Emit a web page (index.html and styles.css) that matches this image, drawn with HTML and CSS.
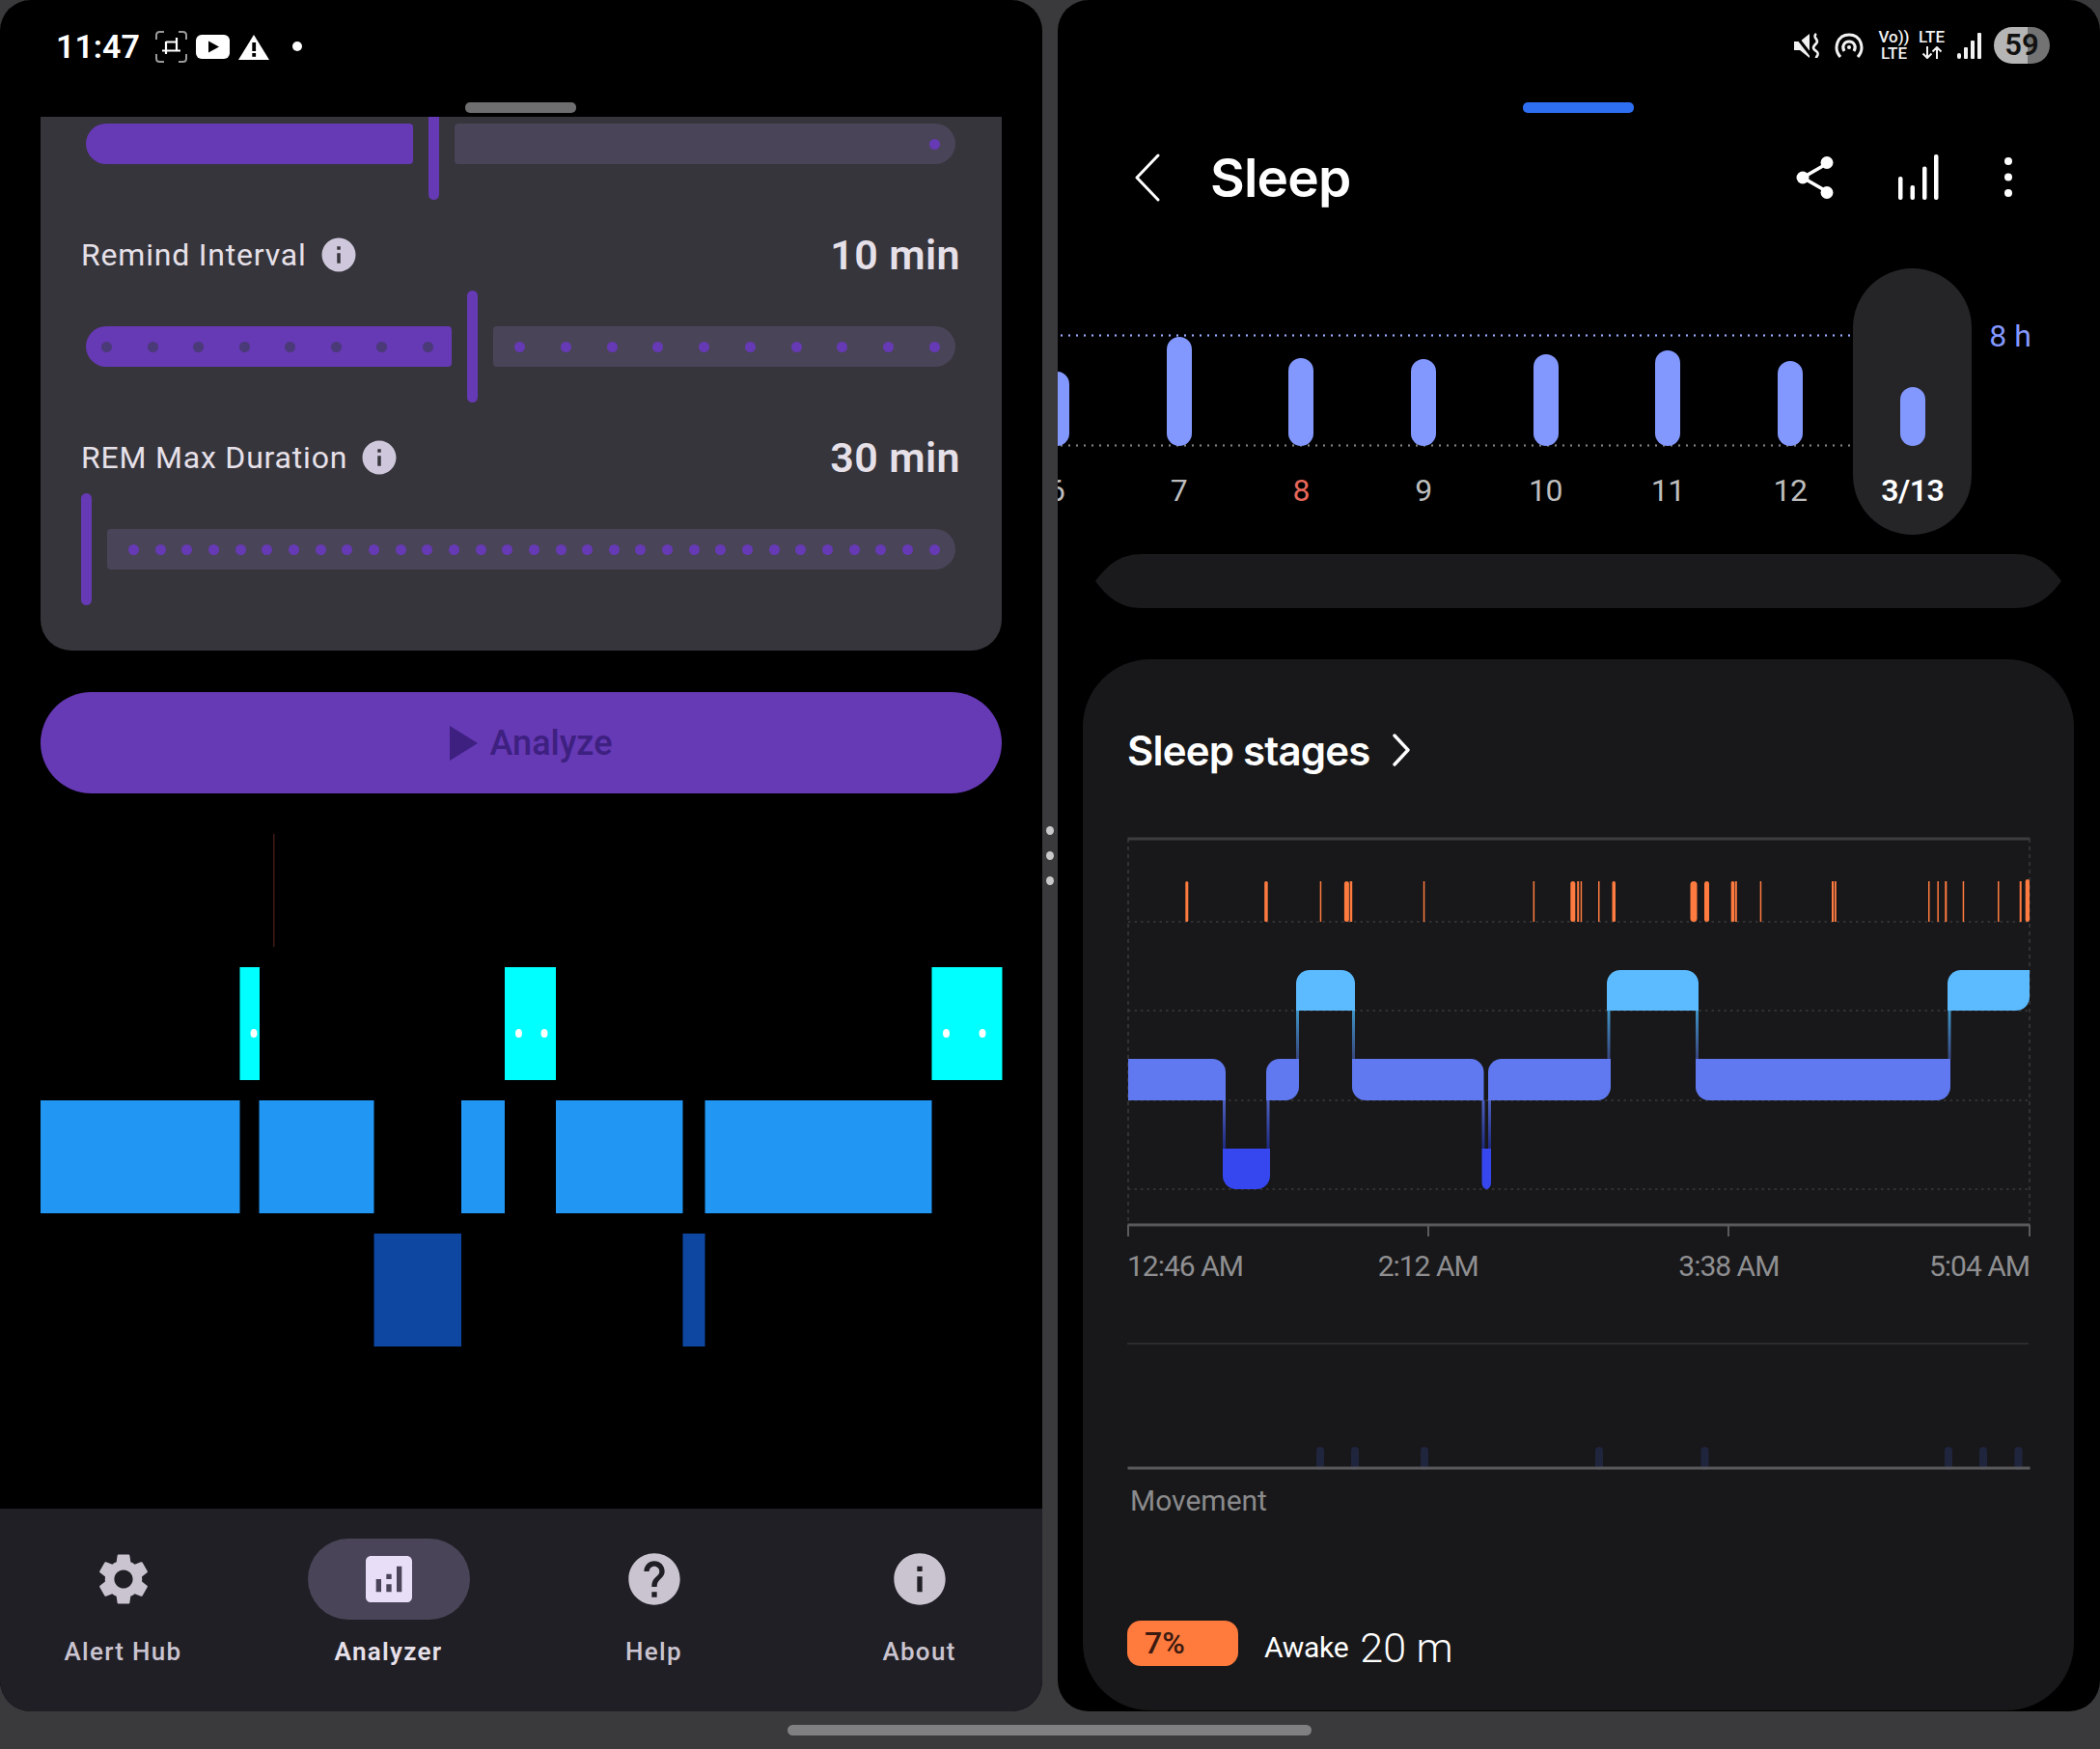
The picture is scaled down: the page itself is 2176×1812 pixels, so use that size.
FILE: index.html
```html
<!DOCTYPE html>
<html lang="en">
<head>
    <meta charset="UTF-8">
    <title>Alert Hub Analyzer and Sleep</title>
    <link rel="stylesheet" href="styles.css">
</head>
<body>

<svg class="sprite" width="0" height="0">
    <symbol id="i-info" viewBox="0 0 24 24"><path d="M12 2C6.48 2 2 6.48 2 12s4.48 10 10 10 10-4.48 10-10S17.52 2 12 2zm1 15h-2v-6h2v6zm0-8h-2V7h2v2z"/></symbol>
    <symbol id="i-gear" viewBox="0 0 24 24"><path d="M19.14 12.94c.04-.3.06-.61.06-.94 0-.32-.02-.64-.07-.94l2.03-1.58c.18-.14.23-.41.12-.61l-1.92-3.32c-.12-.22-.37-.29-.59-.22l-2.39.96c-.5-.38-1.03-.7-1.62-.94l-.36-2.54c-.04-.24-.24-.41-.48-.41h-3.84c-.24 0-.43.17-.47.41l-.36 2.54c-.59.24-1.13.57-1.62.94l-2.39-.96c-.22-.08-.47 0-.59.22L2.74 8.87c-.12.21-.08.47.12.61l2.03 1.58c-.05.3-.09.63-.09.94s.02.64.07.94l-2.03 1.58c-.18.14-.23.41-.12.61l1.92 3.32c.12.22.37.29.59.22l2.39-.96c.5.38 1.03.7 1.62.94l.36 2.54c.05.24.24.41.48.41h3.84c.24 0 .44-.17.47-.41l.36-2.54c.59-.24 1.13-.56 1.62-.94l2.39.96c.22.08.47 0 .59-.22l1.92-3.32c.12-.22.07-.47-.12-.61l-2.01-1.58zM12 15.6c-1.98 0-3.6-1.62-3.6-3.6s1.62-3.6 3.6-3.6 3.6 1.62 3.6 3.6-1.62 3.6-3.6 3.6z"/></symbol>
    <symbol id="i-analytics" viewBox="0 0 24 24"><path d="M19 3H5c-1.1 0-2 .9-2 2v14c0 1.1.9 2 2 2h14c1.1 0 2-.9 2-2V5c0-1.1-.9-2-2-2zM9 17H7v-5h2v5zm4 0h-2v-3h2v3zm0-5h-2v-2h2v2zm4 5h-2V7h2v10z"/></symbol>
    <symbol id="i-help" viewBox="0 0 24 24"><path d="M12 2C6.48 2 2 6.48 2 12s4.48 10 10 10 10-4.48 10-10S17.52 2 12 2zm1 17h-2v-2h2v2zm2.07-7.75l-.9.92C13.45 12.9 13 13.5 13 15h-2v-.5c0-1.1.45-2.1 1.17-2.83l1.24-1.26c.37-.36.59-.86.59-1.41 0-1.1-.9-2-2-2s-2 .9-2 2H8c0-2.21 1.79-4 4-4s4 1.79 4 4c0 .88-.36 1.68-.93 2.25z"/></symbol>
</svg>

<div class="screens">

    <!-- Left app -->
    <main class="pane pane-left">
        <div class="status status-left">
            <span class="clock">11:47</span>
            <svg class="st-shot" width="33" height="33" viewBox="0 0 33 33" fill="none">
                <path d="M1 9V4.500Q1 1 4.500 1H9M24 1h4.500Q32 1 32 4.500V9M32 24v4.500q0 3.500-3.500 3.500H24M9 32H4.500Q1 32 1 28.500V24" stroke="#9a9a9a" stroke-width="2"/>
                <path d="M7 20.500h19M11 11v13M11 11.500h11V20.500M22 7v4" stroke="#fff" stroke-width="2.200"/>
            </svg>
            <svg class="st-yt" width="35" height="25" viewBox="0 0 35 25"><rect width="35" height="25" rx="6" fill="#fff"/><path d="M13 6.500l11 6-11 6z" fill="#000"/></svg>
            <svg class="st-warn" width="32" height="26" viewBox="0 0 32 26"><path d="M16 0L32 26H0z" fill="#fff"/><rect x="14.300" y="8" width="3.800" height="9" fill="#000"/><rect x="14.300" y="19" width="3.800" height="3.800" fill="#000"/></svg>
            <span class="st-dot"></span>
        </div>
        <div class="pane-handle"></div>

        <section class="settings">
            <div class="slider slider-clipped">
                <div class="track track-on" style="width:339px"></div>
                <div class="thumb"></div>
                <div class="track track-off dots-end"><i></i></div>
            </div>

            <div class="setting-row">
                <span class="setting-name">Remind Interval <svg class="info" width="42" height="42"><use href="#i-info"/></svg></span>
                <span class="setting-value">10 min</span>
            </div>
            <div class="slider">
                <div class="track track-on" style="width:379px"><i></i><i></i><i></i><i></i><i></i><i></i><i></i><i></i></div>
                <div class="thumb"></div>
                <div class="track track-off"><i></i><i></i><i></i><i></i><i></i><i></i><i></i><i></i><i></i><i></i></div>
            </div>

            <div class="setting-row">
                <span class="setting-name">REM Max Duration <svg class="info" width="42" height="42"><use href="#i-info"/></svg></span>
                <span class="setting-value">30 min</span>
            </div>
            <div class="slider">
                <div class="thumb thumb-start"></div>
                <div class="track track-off"><i></i><i></i><i></i><i></i><i></i><i></i><i></i><i></i><i></i><i></i><i></i><i></i><i></i><i></i><i></i><i></i><i></i><i></i><i></i><i></i><i></i><i></i><i></i><i></i><i></i><i></i><i></i><i></i><i></i><i></i><i></i></div>
            </div>
        </section>

        <button class="analyze">
            <svg width="29" height="36" viewBox="0 0 29 36"><path d="M0 0l29 18L0 36z"/></svg>
            Analyze
        </button>

        <svg class="timeline" width="997" height="531" viewBox="42 864 997 531">
            <rect x="283" y="864" width="1.500" height="117" fill="#3f1a14"/>
            <g fill="#00ffff">
                <rect x="248.500" y="1002" width="20.500" height="117"/>
                <rect x="523" y="1002" width="53" height="117"/>
                <rect x="965.500" y="1002" width="73" height="117"/>
            </g>
            <g fill="#fff">
                <ellipse cx="263" cy="1070.500" rx="3.500" ry="4.500"/>
                <ellipse cx="537.500" cy="1070.500" rx="3.500" ry="4.500"/>
                <ellipse cx="564" cy="1070.500" rx="3.500" ry="4.500"/>
                <ellipse cx="980.500" cy="1070.500" rx="3.500" ry="4.500"/>
                <ellipse cx="1018" cy="1070.500" rx="3.500" ry="4.500"/>
            </g>
            <g fill="#2196f3">
                <rect x="42" y="1140" width="206.500" height="117"/>
                <rect x="268.500" y="1140" width="119" height="117"/>
                <rect x="478" y="1140" width="45" height="117"/>
                <rect x="576" y="1140" width="131.500" height="117"/>
                <rect x="730.500" y="1140" width="235" height="117"/>
            </g>
            <g fill="#0d47a1">
                <rect x="387.500" y="1278" width="90.500" height="117"/>
                <rect x="707.500" y="1278" width="23" height="117"/>
            </g>
        </svg>

        <nav class="bottom-nav">
            <a class="nav-item">
                <span class="nav-icon"><svg width="64" height="64"><use href="#i-gear"/></svg></span>
                Alert Hub
            </a>
            <a class="nav-item nav-item-active">
                <span class="nav-icon"><svg width="64" height="64"><use href="#i-analytics"/></svg></span>
                Analyzer
            </a>
            <a class="nav-item">
                <span class="nav-icon"><svg width="64" height="64"><use href="#i-help"/></svg></span>
                Help
            </a>
            <a class="nav-item">
                <span class="nav-icon"><svg width="64" height="64"><use href="#i-info"/></svg></span>
                About
            </a>
        </nav>
    </main>

    <!-- Split handle -->
    <div class="hinge"><i></i><i></i><i></i></div>

    <!-- Right app -->
    <main class="pane pane-right">
        <div class="status status-right">
            <svg width="28" height="27" viewBox="0 0 28 27" fill="none">
                <path d="M0 9h6L16 1v25L6 18H0z" fill="#f2f2f2"/>
                <path d="M1 2l18 23" stroke="#000" stroke-width="3"/>
                <path d="M23 1c-5 4 4 6 0 10s-4 5 0 8 0 5 0 7" stroke="#f2f2f2" stroke-width="2.600"/>
            </svg>
            <svg class="st-gap" width="32" height="27" viewBox="0 0 32 27" fill="none" stroke="#f2f2f2" stroke-width="3">
                <path d="M7 25C-1 16 4 2 16 2s17 14 9 23"/>
                <path d="M11 19c-3-5 0-10 5-10s8 5 5 10"/>
                <circle cx="16" cy="15" r="2" fill="#f2f2f2" stroke="none"/>
            </svg>
            <span class="net"><span>Vo))</span><span>LTE</span></span>
            <span class="net net-data"><span>LTE</span>
                <svg width="22" height="13" viewBox="0 0 22 13" fill="none" stroke="#f2f2f2" stroke-width="2"><path d="M6 0v12M1.500 7.500L6 12l4.500-4.500M16 13V1M11.500 5.500L16 1l4.500 4.500"/></svg>
            </span>
            <svg class="st-bars" width="25" height="27" viewBox="0 0 25 27" fill="#f2f2f2">
                <rect x="0" y="21" width="4" height="6" rx="2"/>
                <rect x="7" y="15" width="4" height="12" rx="1"/>
                <rect x="14" y="8" width="4" height="19" rx="1"/>
                <rect x="21" y="0" width="4" height="27" rx="1"/>
            </svg>
            <span class="battery">59</span>
        </div>
        <div class="pane-handle pane-handle-active"></div>

        <header class="toolbar">
            <svg class="back" width="26" height="50" viewBox="0 0 26 50" fill="none"><path d="M24 2L2 25l22 23" stroke="#fff" stroke-width="3" stroke-linecap="round" stroke-linejoin="round"/></svg>
            <h1>Sleep</h1>
            <svg class="tool-share" width="40" height="46" viewBox="0 0 40 46" fill="#fff">
                <path d="M33 8L7 23l26 15" fill="none" stroke="#fff" stroke-width="3.600"/>
                <circle cx="32" cy="7.500" r="6.500"/><circle cx="7" cy="23" r="6.500"/><circle cx="32" cy="38.500" r="6.500"/>
            </svg>
            <svg class="tool-bars" width="42" height="48" viewBox="0 0 42 48" fill="#fff">
                <rect x="0" y="23" width="4.500" height="24" rx="2"/>
                <rect x="12.500" y="32" width="4.500" height="15" rx="2"/>
                <rect x="25" y="12.500" width="4.500" height="34.500" rx="2"/>
                <rect x="37" y="0" width="4.500" height="47" rx="2"/>
            </svg>
            <svg class="tool-more" width="10" height="44" viewBox="0 0 10 44" fill="#fff"><circle cx="5" cy="5" r="4"/><circle cx="5" cy="21.500" r="4"/><circle cx="5" cy="38" r="4"/></svg>
        </header>

        <section class="week">
            <div class="week-line week-line-top"></div>
            <div class="week-line week-line-bottom"></div>
            <div class="week-days">
                <div class="day"><div class="day-plot"><div class="day-bar" style="height:77px"></div></div><span>6</span></div>
                <div class="day"><div class="day-plot"><div class="day-bar" style="height:113px"></div></div><span>7</span></div>
                <div class="day day-sunday"><div class="day-plot"><div class="day-bar" style="height:91px"></div></div><span>8</span></div>
                <div class="day"><div class="day-plot"><div class="day-bar" style="height:90px"></div></div><span>9</span></div>
                <div class="day"><div class="day-plot"><div class="day-bar" style="height:95px"></div></div><span>10</span></div>
                <div class="day"><div class="day-plot"><div class="day-bar" style="height:99px"></div></div><span>11</span></div>
                <div class="day"><div class="day-plot"><div class="day-bar" style="height:88px"></div></div><span>12</span></div>
                <div class="day day-selected"><div class="day-plot"><div class="day-bar" style="height:61px"></div></div><span>3/13</span></div>
                <div class="week-goal">8 h</div>
            </div>
        </section>

        <svg class="lens" width="1001" height="56" viewBox="0 0 1001 56"><path d="M48 0H953C976 0 989 12 1001 28 989 44 976 56 953 56H48C25 56 12 44 0 28 12 12 25 0 48 0z" fill="#1a1a1c"/></svg>

        <section class="sleep-card">
            <h2>Sleep stages
                <svg width="18" height="34" viewBox="0 0 18 34" fill="none"><path d="M2 2l14 15L2 32" stroke="#fff" stroke-width="3.400" stroke-linecap="round" stroke-linejoin="round"/></svg>
            </h2>

            <svg class="stages" width="936" height="416" viewBox="1168 868 936 416">
                <defs>
                    <linearGradient id="up" gradientUnits="userSpaceOnUse" x1="0" y1="1048" x2="0" y2="1098"><stop offset="0" stop-color="#3f93c4"/><stop offset="1" stop-color="#37467f"/></linearGradient>
                    <linearGradient id="down" gradientUnits="userSpaceOnUse" x1="0" y1="1141" x2="0" y2="1191"><stop offset="0" stop-color="#4d60c0"/><stop offset="1" stop-color="#1f2a80"/></linearGradient>
                </defs>
                <g stroke="#3a3a3c" stroke-width="1.500" stroke-dasharray="2.500 4">
                    <path d="M1169 956H2103M1169 1048H2103M1169 1141H2103M1169 1233H2103"/>
                </g>
                <g stroke="#3a3a3c" stroke-width="1.500" stroke-dasharray="4 4">
                    <path d="M1169 870V1270M2103 870V1270"/>
                </g>
                <rect x="1168.500" y="868.500" width="935" height="3" fill="#3c3c3e"/>
                <g fill="#ff7b3f">
                    <rect x="1228.300" y="914" width="3" height="42" rx="1.500"/>
                    <rect x="1310.200" y="914" width="3.500" height="42" rx="1.500"/>
                    <rect x="1367.700" y="914" width="1.500" height="42"/>
                    <rect x="1392.900" y="914" width="5" height="42" rx="2.500"/>
                    <rect x="1398.700" y="914" width="2.500" height="42"/>
                    <rect x="1474.800" y="914" width="1.500" height="42"/>
                    <rect x="1588.600" y="914" width="1.500" height="42"/>
                    <rect x="1627.300" y="914" width="5" height="42" rx="2.500"/>
                    <rect x="1634.200" y="914" width="2" height="42"/>
                    <rect x="1637.700" y="914" width="1.500" height="42"/>
                    <rect x="1656" y="914" width="1.500" height="42"/>
                    <rect x="1670.500" y="914" width="3.500" height="42" rx="1.500"/>
                    <rect x="1751.500" y="914" width="7" height="42" rx="3.500"/>
                    <rect x="1766" y="914" width="5" height="42" rx="2.500"/>
                    <rect x="1793.700" y="914" width="3.500" height="42" rx="1.500"/>
                    <rect x="1797.800" y="914" width="2" height="42"/>
                    <rect x="1823.700" y="914" width="1.500" height="42"/>
                    <rect x="1898" y="914" width="2" height="42"/>
                    <rect x="1900.800" y="914" width="2" height="42"/>
                    <rect x="1998" y="914" width="1.500" height="42"/>
                    <rect x="2007.400" y="914" width="1.500" height="42"/>
                    <rect x="2015.300" y="914" width="2" height="42"/>
                    <rect x="2033.700" y="914" width="1.500" height="42"/>
                    <rect x="2070" y="914" width="1.500" height="42"/>
                    <rect x="2092.700" y="914" width="2" height="42"/>
                    <rect x="2098.700" y="912" width="4.300" height="44" rx="2"/>
                </g>
                <g stroke="url(#up)" stroke-width="3" fill="none">
                    <path d="M1344.500 1048v50M1402.500 1048v50M1667 1048v50M1758.500 1048v50M2020 1048v50"/>
                </g>
                <g stroke="url(#down)" stroke-width="3" fill="none">
                    <path d="M1268.500 1141v50M1314 1141v50M1537 1141v50M1543.500 1141v50"/>
                </g>
                <g fill="#5cbaff">
                    <path d="M1343 1048V1020a14 14 0 0 1 14-14h33a14 14 0 0 1 14 14v28z"/>
                    <path d="M1665 1048V1020a14 14 0 0 1 14-14h67a14 14 0 0 1 14 14v28z"/>
                    <path d="M2018 1048V1020a14 14 0 0 1 14-14h71v28a14 14 0 0 1-14 14z"/>
                </g>
                <g fill="#6078f0">
                    <path d="M1169 1098h87a14 14 0 0 1 14 14v29h-101z"/>
                    <path d="M1312 1141v-29a14 14 0 0 1 14-14h20v29a14 14 0 0 1-14 14z"/>
                    <path d="M1401 1098h122.500a14 14 0 0 1 14 14v29h-122.500a14 14 0 0 1-14-14z"/>
                    <path d="M1542 1141v-29a14 14 0 0 1 14-14h113v29a14 14 0 0 1-14 14z"/>
                    <path d="M1757 1098h264v29a14 14 0 0 1-14 14h-236a14 14 0 0 1-14-14z"/>
                </g>
                <g fill="#3647f0">
                    <path d="M1267 1191h49v28a14 14 0 0 1-14 14h-21a14 14 0 0 1-14-14z"/>
                    <path d="M1535.500 1191h9.500v35a4.750 7 0 0 1-9.500 0z"/>
                </g>
                <rect x="1168.500" y="1268.500" width="935" height="3" fill="#5a5a5c"/>
                <path d="M1169 1270v12M1480 1270v12M1791 1270v12M2103 1270v12" stroke="#5a5a5c" stroke-width="2"/>
            </svg>

            <div class="time-labels">
                <span>12:46 AM</span>
                <span>2:12 AM</span>
                <span>3:38 AM</span>
                <span>5:04 AM</span>
            </div>

            <div class="card-sep"></div>

            <svg class="movement" width="936" height="131" viewBox="1168 1394 936 131">
                <g fill="#20253e">
                    <rect x="1364" y="1500" width="8" height="24" rx="4"/>
                    <rect x="1400" y="1500" width="8" height="24" rx="4"/>
                    <rect x="1472" y="1500" width="8" height="24" rx="4"/>
                    <rect x="1653" y="1500" width="8" height="24" rx="4"/>
                    <rect x="1762.500" y="1500" width="8" height="24" rx="4"/>
                    <rect x="2015" y="1500" width="8" height="24" rx="4"/>
                    <rect x="2051" y="1500" width="8" height="24" rx="4"/>
                    <rect x="2087.500" y="1500" width="8" height="24" rx="4"/>
                </g>
                <rect x="1168.500" y="1520.500" width="935" height="3" fill="#5a5a5c"/>
            </svg>
            <div class="movement-label">Movement</div>

            <div class="legend">
                <span class="legend-badge">7%</span>
                <div class="legend-text">
                    <span class="legend-name">Awake</span>
                    <span class="legend-value">20 m</span>
                </div>
            </div>
        </section>
    </main>
</div>

<div class="home-bar"></div>

</body>
</html>
```
FILE: styles.css
```css
body {
    margin: 0;
    width: 2176px;
    height: 1812px;
    overflow: hidden;
    background: #3a3a3c;
    font-family: 'Roboto', sans-serif;
    color: #e6e0e9;
}
.sprite {
    position: absolute;
}
svg {
    display: block;
    flex: none;
}
.screens {
    display: flex;
    height: 1773px;
}
.pane {
    position: relative;
    width: 1080px;
    height: 1773px;
    background: #000;
    border-radius: 32px;
    overflow: hidden;
    display: flex;
    flex-direction: column;
}
.hinge {
    width: 16px;
    padding-top: 856px;
    display: flex;
    flex-direction: column;
    align-items: center;
    gap: 17px;
}
.hinge i {
    width: 8px;
    height: 9px;
    border-radius: 50%;
    background: #c9c9c9;
}
.home-bar {
    width: 543px;
    height: 11px;
    margin: 14px 0 0 816px;
    border-radius: 6px;
    background: #808082;
}

/* Status bars */
.status {
    display: flex;
    flex: none;
}
.status-left {
    height: 121px;
    padding-left: 58px;
    align-items: flex-start;
    color: #fff;
}
.clock {
    font-size: 34px;
    font-weight: 600;
    line-height: 96px;
    width: 103px;
}
.st-shot {
    margin-top: 32px;
}
.st-yt {
    margin: 36px 0 0 9px;
}
.st-warn {
    margin: 36px 0 0 9px;
}
.st-dot {
    width: 10px;
    height: 10px;
    margin: 43px 0 0 24px;
    border-radius: 50%;
    background: #fff;
}
.status-right {
    height: 105px;
    padding: 28px 52px 0 0;
    box-sizing: border-box;
    justify-content: flex-end;
    align-items: flex-start;
    color: #f2f2f2;
}
.status-right > svg {
    margin-top: 6px;
}
.status-right > .st-gap {
    margin-left: 13px;
}
.status-right > .st-bars {
    margin-left: 12px;
}
.net {
    display: flex;
    flex-direction: column;
    align-items: center;
    margin: 2px 0 0 16px;
    font-size: 17px;
    font-weight: 500;
    line-height: 17px;
    width: 29px;
}
.net-data {
    margin-left: 10px;
}
.net-data svg {
    margin-top: 1px;
}
.battery {
    width: 58px;
    height: 38px;
    margin-left: 13px;
    border-radius: 19px;
    background: linear-gradient(90deg, #b5b5b5 60%, #737373 60%);
    color: #111;
    font-size: 31px;
    font-weight: 600;
    line-height: 38px;
    text-align: center;
}
.pane-handle {
    position: absolute;
    left: 482px;
    top: 106px;
    width: 115px;
    height: 11px;
    border-radius: 5px;
    background: #6e6e70;
}
.pane-handle-active {
    background: #2e6ff2;
}

/* Settings card */
.settings {
    flex: none;
    box-sizing: border-box;
    height: 553px;
    margin: 0 42px;
    padding: 0 43px 0 42px;
    background: #36353b;
    border-radius: 0 0 32px 32px;
    overflow: hidden;
}
.slider {
    display: flex;
    align-items: center;
    gap: 16px;
    height: 116px;
}
.slider-clipped {
    margin-top: -30px;
}
.track {
    box-sizing: border-box;
    height: 42px;
    display: flex;
    align-items: center;
    justify-content: space-between;
    padding: 0 16px 0 22px;
}
.track i {
    width: 11px;
    height: 11px;
    border-radius: 50%;
}
.track-on {
    flex: none;
    margin-left: 5px;
    padding: 0 19px 0 16px;
    background: #6639b5;
    border-radius: 21px 4px 4px 21px;
}
.track-on i {
    background: #4a3a78;
}
.track-off {
    flex: 1;
    margin-right: 5px;
    background: #4a4458;
    border-radius: 4px 21px 21px 4px;
}
.track-off i {
    background: #6639b5;
}
.dots-end {
    justify-content: flex-end;
}
.thumb {
    flex: none;
    width: 11px;
    height: 116px;
    border-radius: 6px;
    background: #6639b5;
}
.setting-row {
    box-sizing: border-box;
    height: 94px;
    padding-top: 20px;
    display: flex;
    align-items: center;
    justify-content: space-between;
}
.setting-name {
    display: flex;
    align-items: center;
    gap: 12px;
    font-size: 32px;
    letter-spacing: 0.8px;
    color: #e6e0e9;
}
.info {
    fill: #cfc8dc;
}
.setting-value {
    font-size: 43px;
    font-weight: 600;
    letter-spacing: 0.4px;
}

/* Analyze button */
.analyze {
    flex: none;
    display: flex;
    align-items: center;
    justify-content: center;
    gap: 13px;
    height: 105px;
    margin: 43px 42px 0;
    padding: 0 0 0 20px;
    border: none;
    border-radius: 53px;
    background: #6639b5;
    color: #3d2080;
    fill: #3d2080;
    font-family: 'Roboto', sans-serif;
    font-size: 36px;
    font-weight: 500;
}

/* Detected blocks */
.timeline {
    margin: 42px 0 0 42px;
}

/* Bottom navigation */
.bottom-nav {
    flex: none;
    margin-top: auto;
    height: 210px;
    background: #201f25;
    display: flex;
    justify-content: center;
}
.nav-item {
    flex: none;
    width: 275px;
    padding-top: 31px;
    box-sizing: border-box;
    display: flex;
    flex-direction: column;
    align-items: center;
    color: #cac4d0;
    fill: #cac4d0;
    font-size: 26px;
    font-weight: 500;
    letter-spacing: 1.3px;
}
.nav-icon {
    width: 168px;
    height: 84px;
    margin-bottom: 18px;
    border-radius: 42px;
    display: flex;
    align-items: center;
    justify-content: center;
}
.nav-item-active {
    color: #e6e0e9;
    fill: #e8def8;
    font-weight: 600;
}
.nav-item-active .nav-icon {
    background: #4a4458;
}

/* Sleep toolbar */
.toolbar {
    flex: none;
    height: 134px;
    margin-top: 12px;
    padding-left: 80px;
    display: flex;
    align-items: center;
}
.toolbar h1 {
    width: 607px;
    margin: 0 0 0 52px;
    font-family: 'Inter', sans-serif;
    font-size: 55px;
    font-weight: 600;
    letter-spacing: -0.8px;
    color: #fff;
}
.tool-bars {
    margin-left: 66px;
}
.tool-more {
    margin-left: 67px;
}

/* Weekly bars */
.week {
    position: relative;
    flex: none;
    height: 276px;
    margin-top: 27px;
    overflow: hidden;
}
.week-line {
    position: absolute;
    left: 0;
    width: 821px;
    height: 3px;
    background-size: 8px 3px;
}
.week-line-top {
    top: 68px;
    background-image: radial-gradient(circle, #9aabff 1px, transparent 1.3px);
}
.week-line-bottom {
    top: 182px;
    background-image: radial-gradient(circle, #808080 1px, transparent 1.3px);
}
.week-days {
    position: relative;
    display: flex;
    height: 276px;
    margin-left: -64.5px;
}
.day {
    flex: none;
    width: 126.700px;
    height: 276px;
    display: flex;
    flex-direction: column;
    align-items: center;
    font-size: 32px;
    letter-spacing: -0.5px;
    color: #bdbdbd;
}
.day-plot {
    height: 184px;
    margin-bottom: 27px;
    display: flex;
    align-items: flex-end;
}
.day-bar {
    width: 26px;
    border-radius: 13px;
    background: #8398ff;
}
.day-sunday {
    color: #e8685a;
}
.day-selected {
    width: 123px;
    margin: 0 2px;
    border-radius: 62px;
    background: #252528;
    color: #fff;
    font-weight: 600;
}
.week-goal {
    margin: 50px 0 0 16px;
    font-size: 32px;
    line-height: 40px;
    color: #8398ff;
}

/* Lens shaped empty panel */
.lens {
    flex: none;
    margin: 20px 0 0 39px;
}

/* Sleep stages card */
.sleep-card {
    flex: none;
    box-sizing: border-box;
    width: 1027px;
    height: 1089px;
    margin: 53px 0 0 26px;
    padding: 64px 0 0 46px;
    background: #18181a;
    border-radius: 70px;
}
.sleep-card h2 {
    display: flex;
    align-items: center;
    gap: 23px;
    height: 60px;
    margin: 0;
    font-family: 'Inter', sans-serif;
    font-size: 42px;
    font-weight: 600;
    letter-spacing: -0.8px;
    color: #fff;
}
.stages {
    margin-top: 60px;
}
.time-labels {
    display: grid;
    grid-template-columns: 1fr 2fr 2fr 1fr;
    width: 935px;
    height: 58px;
    font-size: 30px;
    line-height: 58px;
    letter-spacing: -1px;
    color: #8f8f91;
    text-align: center;
}
.time-labels span:first-child {
    text-align: left;
}
.time-labels span:last-child {
    text-align: right;
}
.card-sep {
    width: 934px;
    height: 2px;
    margin-top: 50px;
    background: #2c2c2e;
}
.movement-label {
    margin: 11px 0 0 3px;
    font-size: 30px;
    line-height: 40px;
    color: #8a8a8c;
}
.legend {
    display: flex;
    align-items: flex-start;
    margin-top: 104px;
    color: #fff;
}
.legend-badge {
    box-sizing: border-box;
    width: 115px;
    height: 47px;
    padding-left: 18px;
    border-radius: 14px;
    background: #ff7a3d;
    color: #3b1a10;
    font-size: 32px;
    font-weight: 500;
    line-height: 47px;
}
.legend-text {
    display: flex;
    align-items: flex-start;
    gap: 12px;
    margin-left: 27px;
}
.legend-name {
    margin-top: 8px;
    font-size: 30px;
    line-height: 40px;
    letter-spacing: -0.3px;
}
.legend-value {
    font-size: 43px;
    font-weight: 300;
    line-height: 56px;
}
```
